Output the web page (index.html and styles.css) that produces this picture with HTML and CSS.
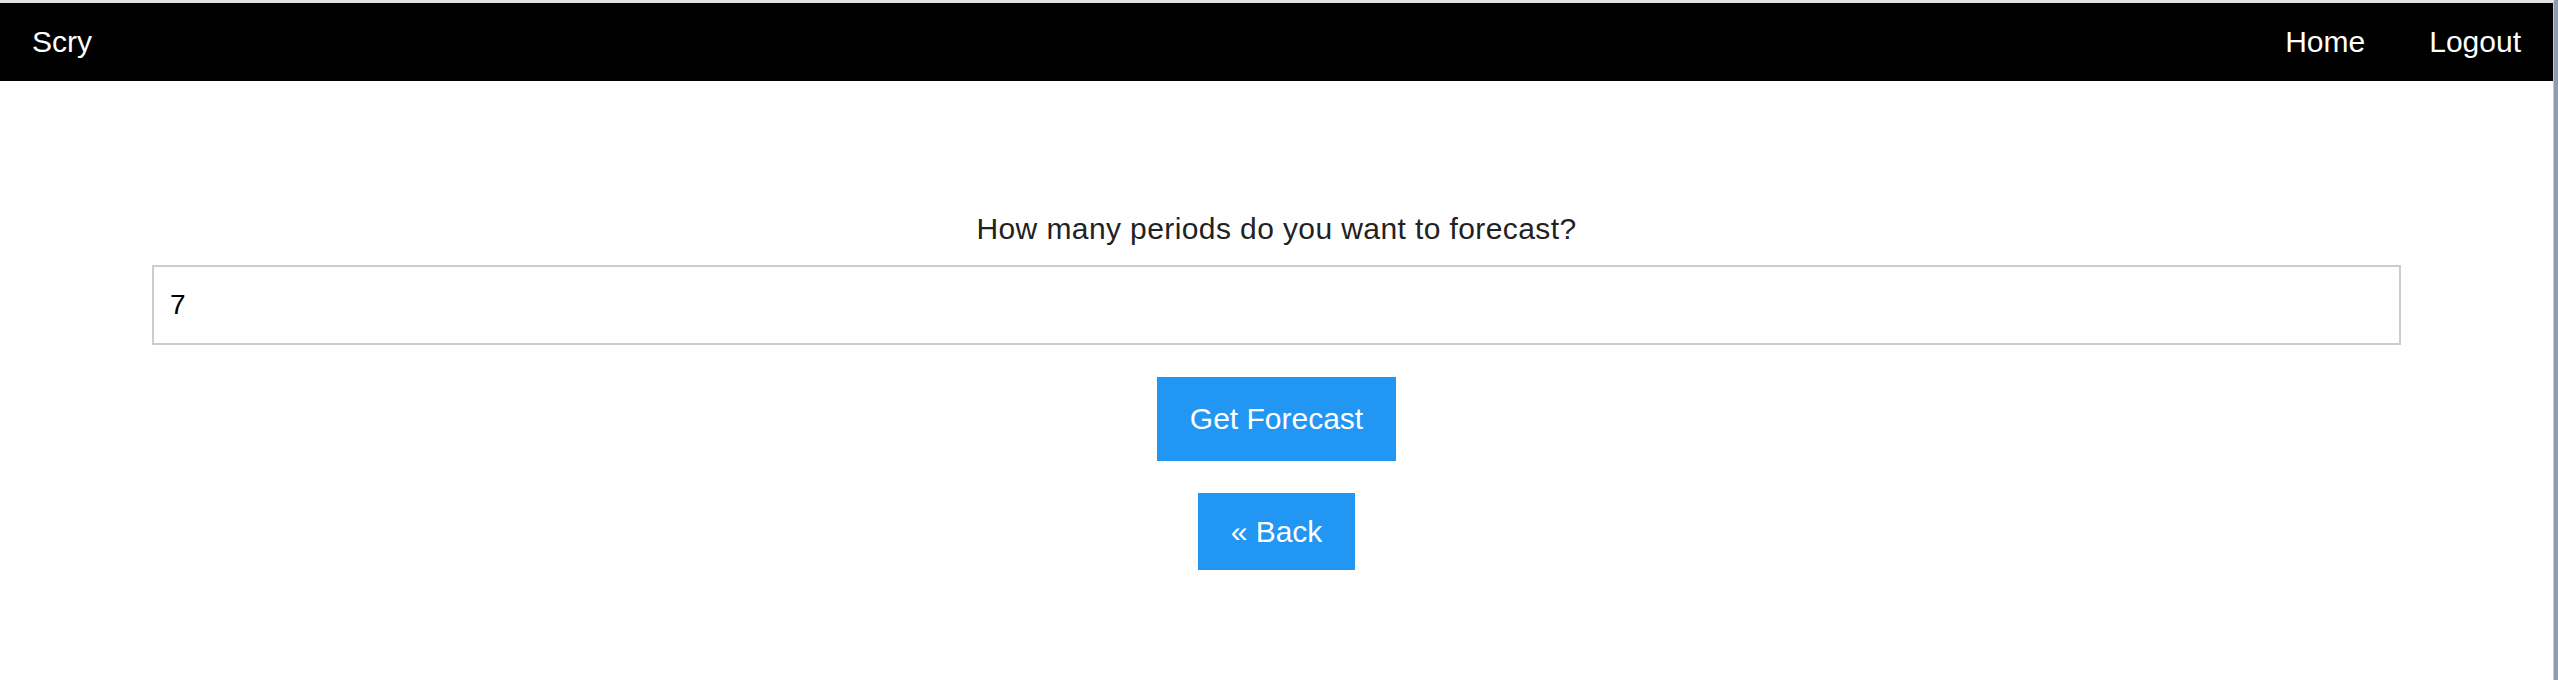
FILE: index.html
```html
<!DOCTYPE html>
<html lang="en">
<head>
<meta charset="utf-8">
<title>Scry - Forecast</title>
<link rel="stylesheet" href="styles.css">
</head>
<body>
<div class="window">
  <nav class="navbar">
    <a class="nav-item brand" href="#">Scry</a>
    <div class="nav-right">
      <a class="nav-item" href="#">Home</a>
      <a class="nav-item" href="#">Logout</a>
    </div>
  </nav>
  <main class="content">
    <form class="forecast-form">
      <label class="question" for="periods">How many periods do you want to forecast?</label>
      <input class="periods-input" id="periods" type="text" value="7">
      <button class="btn btn-forecast" type="button">Get Forecast</button>
      <a class="btn btn-back" href="#">&laquo; Back</a>
    </form>
  </main>
</div>
</body>
</html>
```

FILE: styles.css
```css
html, body {
  margin: 0;
  padding: 0;
  height: 100%;
}

body {
  background: #8e9dae;
  font-family: "Liberation Sans", Arial, sans-serif;
}

.window {
  box-sizing: border-box;
  height: 100%;
  margin-right: 4px;
  background: #ffffff;
  border-top: 3px solid #e2e2e2;
  border-right: 1px solid #c9c9c9;
}

.navbar {
  display: flex;
  justify-content: space-between;
  align-items: center;
  background: #000000;
}

.nav-right {
  display: flex;
}

.nav-item {
  display: block;
  padding: 16px 32px;
  font-size: 30px;
  line-height: 46px;
  color: #ffffff;
  text-decoration: none;
}

.content {
  padding: 125px 152px 0 152px;
}

.forecast-form {
  display: flex;
  flex-direction: column;
  align-items: center;
}

.question {
  display: block;
  font-family: "Liberation Sans", Arial, sans-serif;
  font-size: 30px;
  line-height: 45px;
  letter-spacing: 0.4px;
  color: #222222;
  margin-bottom: 14px;
}

.periods-input {
  box-sizing: border-box;
  width: 100%;
  height: 80px;
  padding: 0 16px;
  border: 2px solid #cccccc;
  font-family: "Liberation Sans", Arial, sans-serif;
  font-size: 28px;
  color: #000000;
  background: #ffffff;
  outline: none;
}

.btn {
  display: inline-block;
  border: none;
  background: #2196f3;
  color: #ffffff;
  font-family: "Liberation Sans", Arial, sans-serif;
  font-size: 30px;
  text-decoration: none;
  cursor: pointer;
}

.btn-forecast {
  margin-top: 32px;
  padding: 16px 33px;
  line-height: 52px;
}

.btn-back {
  margin-top: 32px;
  padding: 16px 33px;
  line-height: 45px;
}
```
